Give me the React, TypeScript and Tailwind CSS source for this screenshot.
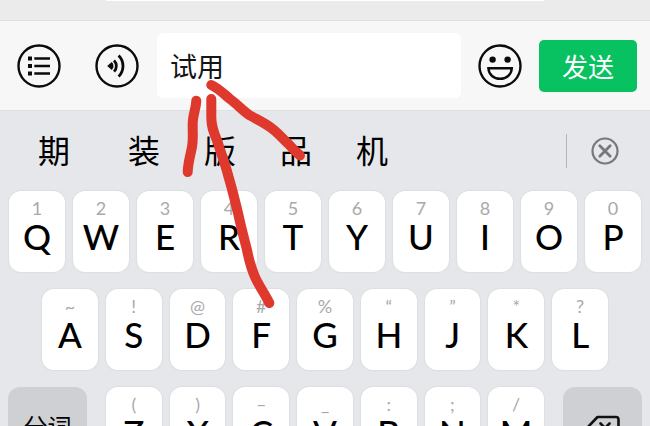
import { useState } from "react";

type KeyDef = { label: string; hint: string };

const topRow: KeyDef[] = [
  { label: "Q", hint: "1" },
  { label: "W", hint: "2" },
  { label: "E", hint: "3" },
  { label: "R", hint: "4" },
  { label: "T", hint: "5" },
  { label: "Y", hint: "6" },
  { label: "U", hint: "7" },
  { label: "I", hint: "8" },
  { label: "O", hint: "9" },
  { label: "P", hint: "0" },
];

const homeRow: KeyDef[] = [
  { label: "A", hint: "~" },
  { label: "S", hint: "!" },
  { label: "D", hint: "@" },
  { label: "F", hint: "#" },
  { label: "G", hint: "%" },
  { label: "H", hint: "“" },
  { label: "J", hint: "”" },
  { label: "K", hint: "*" },
  { label: "L", hint: "?" },
];

const bottomRow: KeyDef[] = [
  { label: "Z", hint: "(" },
  { label: "X", hint: ")" },
  { label: "C", hint: "–" },
  { label: "V", hint: "_" },
  { label: "B", hint: ":" },
  { label: "N", hint: ";" },
  { label: "M", hint: "/" },
];

const candidates = ["装", "版", "品", "机"];

function Key({ label, hint }: KeyDef) {
  return (
    <button
      type="button"
      className="flex h-[81px] min-w-0 flex-1 flex-col items-center rounded-xl bg-white pt-[7px] font-['Lato','Noto_Sans',sans-serif] shadow-[0_0_1px_1px_#dddee2]"
    >
      <span className="text-[18px] leading-5 text-[#a9a9a9]">{hint}</span>
      <span className="text-[35px] leading-9 font-medium text-black">{label}</span>
    </button>
  );
}

function ListIcon() {
  return (
    <svg viewBox="0 0 44 44" className="size-11" fill="none" stroke="#0b0b0b" strokeWidth="2.4">
      <circle cx="22" cy="22" r="20.5" />
      <path d="M17.3 14.5H33M17.3 22H33M17.3 29.5H33" strokeWidth="2.6" />
      <path d="M11 14.5h4M11 22h4M11 29.5h4" strokeWidth="4" />
    </svg>
  );
}

function VoiceIcon() {
  return (
    <svg viewBox="0 0 44 44" className="size-11" fill="none" stroke="#0b0b0b" strokeWidth="2.4">
      <circle cx="22" cy="22" r="20.5" />
      <path d="M12.2 22l4.6-4a5.6 5.6 0 0 1 0 8z" fill="#0b0b0b" stroke="none" />
      <path d="M19 16.400a7.900 7.900 0 0 1 0 11.200M23.600 11.400a15 15 0 0 1 0 21.200" strokeWidth="2.800" />
    </svg>
  );
}

function SmileIcon() {
  return (
    <svg viewBox="0 0 44 44" className="size-11" fill="none" stroke="#0b0b0b" strokeWidth="2.4">
      <circle cx="22" cy="22" r="20.5" />
      <circle cx="14.6" cy="15.6" r="3.2" fill="#0b0b0b" stroke="none" />
      <circle cx="29.6" cy="15.6" r="3.2" fill="#0b0b0b" stroke="none" />
      <path d="M10.4 24.2h23.4c-.4 6.600-5.400 10.600-11.700 10.600s-11.300-4-11.700-10.600z" />
    </svg>
  );
}

export default function App() {
  const [message, setMessage] = useState("试用");

  return (
    <main
      lang="zh-CN"
      className="relative flex h-screen w-full flex-col overflow-hidden bg-[#e6e7eb] font-['Noto_Sans_CJK_SC',sans-serif]"
    >
      <div className="flex h-[21px] shrink-0 justify-center border-b border-[#dfdfdf] bg-[#ebebeb]">
        <div className="h-px w-[438px] bg-white" />
      </div>

      <form
        className="flex h-[90px] shrink-0 items-center border-b border-[#dfe0e3] bg-[#f7f7f7] pr-[13px] pl-[17px]"
        onSubmit={(event) => event.preventDefault()}
      >
        <button type="button" aria-label="菜单" className="shrink-0">
          <ListIcon />
        </button>
        <button type="button" aria-label="语音" className="ml-[34px] shrink-0">
          <VoiceIcon />
        </button>
        <input
          type="text"
          aria-label="消息"
          value={message}
          onChange={(event) => setMessage(event.target.value)}
          className="ml-[18px] h-[65px] min-w-0 flex-1 rounded-md bg-white px-[13px] text-[27px] text-[#151515] outline-none"
        />
        <button type="button" aria-label="表情" className="ml-[17px] shrink-0">
          <SmileIcon />
        </button>
        <button
          type="submit"
          className="ml-[17px] h-[52px] w-[98px] shrink-0 rounded-[5px] bg-[#08c160] text-[26px] leading-none text-white"
        >
          发送
        </button>
      </form>

      <div className="flex h-20 shrink-0 items-center pr-[31px] pl-[38px] text-[32px] leading-none text-black">
        <button type="button" className="pb-1">
          期
        </button>
        <div className="ml-[58px] flex flex-1 gap-11">
          {candidates.map((word) => (
            <button key={word} type="button" className="pb-1">
              {word}
            </button>
          ))}
        </div>
        <div className="h-[34px] w-px bg-[#b4b5b8]" />
        <button type="button" aria-label="关闭" className="ml-6">
          <svg viewBox="0 0 28 28" className="size-7" fill="none" stroke="#77787b">
            <circle cx="14" cy="14" r="12.500" strokeWidth="2.2" />
            <path d="M8.800 8.800l10.400 10.400M19.200 8.800L8.800 19.200" strokeWidth="2.800" strokeLinecap="round" />
          </svg>
        </button>
      </div>

      <div className="flex shrink-0 flex-col gap-[17px]">
        <div className="flex gap-2 px-[9px]">
          {topRow.map((item) => (
            <Key key={item.label} {...item} />
          ))}
        </div>
        <div className="flex gap-2 px-[42px]">
          {homeRow.map((item) => (
            <Key key={item.label} {...item} />
          ))}
        </div>
        <div className="flex gap-[19px] px-2">
          <button
            type="button"
            className="flex h-[81px] w-[79px] shrink-0 items-center justify-center rounded-xl bg-[#cfd0d4] pb-1 text-2xl leading-none text-black"
          >
            分词
          </button>
          <div className="flex min-w-0 flex-1 gap-2">
            {bottomRow.map((item) => (
              <Key key={item.label} {...item} />
            ))}
          </div>
          <button
            type="button"
            aria-label="删除"
            className="flex h-[81px] w-[79px] shrink-0 items-center justify-center rounded-xl bg-[#cfd0d4]"
          >
            <svg viewBox="0 0 36 26" className="h-[26px] w-9" fill="none" stroke="#111" strokeWidth="2.600" strokeLinecap="round" strokeLinejoin="round">
              <path d="M12.500 2H31a2.500 2.500 0 0 1 2.500 2.500v17A2.500 2.500 0 0 1 31 24H12.500L2 13z" />
              <path d="M15.500 8.500l9 9M24.500 8.500l-9 9" />
            </svg>
          </button>
        </div>
      </div>

      {/* Hand-drawn arrow pointing at the message text */}
      <svg
        aria-hidden="true"
        viewBox="0 0 650 426"
        className="pointer-events-none absolute top-0 left-0 h-[426px] w-[650px]"
        fill="none"
        stroke="#df392d"
        strokeWidth="10"
        strokeLinecap="round"
        strokeLinejoin="round"
      >
        <path d="M196.300 100.700C196 109 192.700 115 192.700 124C192.500 132 193.500 138 192 147C190 157 188 163 187.700 172" />
        <path d="M211.300 99V118C211.500 128 214 133 218 143C221 154 225 163 228 175C232 188 235 201 238 213C241 227 244 238 247 250C249 260 251 268 255 277C259 286 265 294 269.300 303" />
        <path d="M211.300 85C218 88 224 94 230 99C237 104 243 111 250 115.500C258 120 265 123 272 128.500C278 133 283 139 288 143.500C292 148 296 152 300 155.500" />
      </svg>
    </main>
  );
}
